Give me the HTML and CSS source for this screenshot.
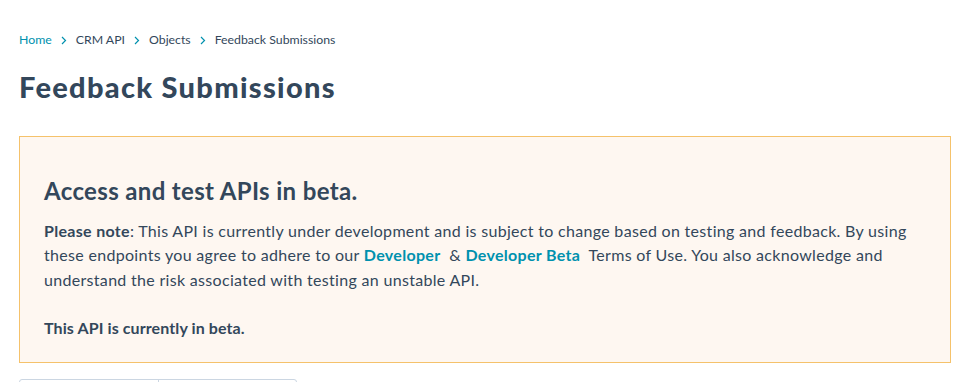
FILE: index.html
```html
<!DOCTYPE html>
<html lang="en">
<head>
<meta charset="utf-8">
<link rel="stylesheet" href="styles.css">
</head>
<body>
<main class="page">
  <nav class="crumbs">
    <a class="crumb-link" href="#">Home</a>
    <span class="sep"><svg width="6" height="9" viewBox="0 0 6 9"><path d="M1 1 L4.5 4.5 L1 8" fill="none" stroke="currentColor" stroke-width="1.2"/></svg></span>
    <span class="crumb">CRM API</span>
    <span class="sep"><svg width="6" height="9" viewBox="0 0 6 9"><path d="M1 1 L4.5 4.5 L1 8" fill="none" stroke="currentColor" stroke-width="1.2"/></svg></span>
    <span class="crumb">Objects</span>
    <span class="sep"><svg width="6" height="9" viewBox="0 0 6 9"><path d="M1 1 L4.5 4.5 L1 8" fill="none" stroke="currentColor" stroke-width="1.2"/></svg></span>
    <span class="crumb">Feedback Submissions</span>
  </nav>
  <h1 class="title">Feedback Submissions</h1>
  <section class="alert">
    <h2 class="alert-title">Access and test APIs in beta.</h2>
    <p class="alert-text"><strong>Please note</strong>: This API is currently under development and is subject to change based on testing and feedback. By using these endpoints you agree to adhere to our <a class="link" href="#">Developer</a> &nbsp;&amp; <a class="link" href="#">Developer Beta</a> &nbsp;Terms of Use. You also acknowledge and understand the risk associated with testing an unstable API.</p>
    <p class="alert-strong">This API is currently in beta.</p>
  </section>
  <div class="tabs">
    <div class="tab"></div>
    <div class="tab"></div>
  </div>
</main>
</body>
</html>
```
FILE: styles.css
```css
* { box-sizing: border-box; }
html, body { margin: 0; background: #fff; }
body {
  font-family: Lato, "Noto Sans", sans-serif;
  color: #33475b;
}
.page {
  padding: 31px 27px 0 19px;
}
.crumbs {
  display: flex;
  align-items: center;
  font-size: 12.3px;
  line-height: 18px;
  gap: 8px;
}
.crumb-link { color: #0091ae; text-decoration: none; }
.crumb { color: #33475b; }
.sep { color: #0091ae; display: flex; align-items: center; margin: 0 1px; }
.title {
  margin: 20px 0 0;
  font-size: 29px;
  line-height: 36px;
  font-weight: 900;
  letter-spacing: 1.3px;
  color: #33475b;
}
.alert {
  margin-top: 31px;
  border: 1px solid #f5c26b;
  background: #fef7f1;
  padding: 39px 24px 22px;
}
.alert-title {
  margin: 0;
  font-size: 24px;
  line-height: 30px;
  font-weight: 700;
  letter-spacing: 0.35px;
}
.alert-text {
  margin: 13px 0 0;
  font-size: 16px;
  line-height: 24.3px;
  letter-spacing: 0.31px;
}
.alert-text strong { font-weight: 700; }
.link { color: #0091ae; font-weight: 700; text-decoration: none; }
.alert-strong {
  margin: 24px 0 0;
  font-size: 16px;
  line-height: 24px;
  font-weight: 700;
  letter-spacing: 0.1px;
}
.tabs {
  margin-top: 16px;
  display: flex;
  width: 278px;
  height: 30px;
  border: 1px solid #cbd6e2;
  border-radius: 3px;
}
.tab { flex: 1; }
.tab + .tab { border-left: 1px solid #cbd6e2; }
```
